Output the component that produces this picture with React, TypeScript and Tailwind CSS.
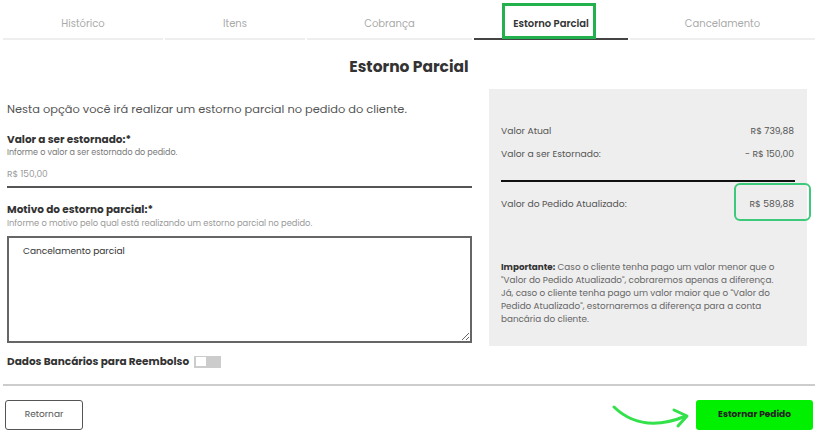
import React from 'react';

const tabs = [
  { label: 'Histórico', w: 'w-[160px]' },
  { label: 'Itens', w: 'w-[140px]' },
  { label: 'Cobrança', w: 'w-[165px]' },
  { label: 'Estorno Parcial', w: 'w-[154px]', active: true },
  { label: 'Cancelamento', w: 'flex-1' },
];

const App: React.FC = () => {
  return (
    <div className="w-[818px] h-[438px] bg-white text-[#333] overflow-hidden" style={{ fontFamily: 'Poppins, Inter, "Noto Sans", sans-serif' }}>
      {/* Tabs */}
      <div className="flex gap-[2px] px-[3px] h-[40px]">
        {tabs.map((tab) => (
          <div
            key={tab.label}
            className={`${tab.w} relative flex items-center justify-center pt-[8px] border-b-2 ${tab.active ? 'border-[#444]' : 'border-[#eee]'}`}
          >
            <span className={`text-[10px] ${tab.active ? 'font-semibold text-[#333]' : 'text-[#aaa]'}`}>{tab.label}</span>
            {tab.active && (
              <div className="absolute left-[28px] top-[3px] w-[94px] h-[36px] border-[3px] border-[#22b14c]" />
            )}
          </div>
        ))}
      </div>

      <h2 className="text-center text-[15.5px] font-bold text-[#333] mt-[17px] leading-[20px]">Estorno Parcial</h2>

      <div className="flex px-[7px] mt-[12px] gap-[16px]">
        {/* Form column */}
        <div className="w-[465px]">
          <p className="text-[11.4px] text-[#555] mt-[12px] leading-[16px]">Nesta opção você irá realizar um estorno parcial no pedido do cliente.</p>

          <p className="text-[10.5px] font-bold text-[#333] mt-[15px] leading-[16px]">Valor a ser estornado:*</p>
          <p className="text-[8px] text-[#777] leading-[10px]">Informe o valor a ser estornado do pedido.</p>
          <div className="mt-[10px] pb-[6px] border-b-2 border-[#555] text-[9px] text-[#999] leading-[12px]">R$ 150,00</div>

          <p className="text-[10.5px] font-bold text-[#333] mt-[14px] leading-[16px]">Motivo do estorno parcial:*</p>
          <p className="text-[8.3px] text-[#999] leading-[10px]">Informe o motivo pelo qual está realizando um estorno parcial no pedido.</p>
          <textarea
            className="mt-[8px] w-full h-[107px] border-2 border-[#666] px-[14px] py-[7px] text-[9px] text-[#333] outline-none block resize-y"
            defaultValue="Cancelamento parcial"
          />

          <div className="flex items-center gap-[5px] mt-[11px]">
            <span className="text-[10.5px] font-bold text-[#333]">Dados Bancários para Reembolso</span>
            <div className="w-[27px] h-[12px] bg-[#ccc] flex items-center pl-[2px]">
              <div className="w-[10px] h-[9px] bg-white" />
            </div>
          </div>
        </div>

        {/* Summary panel */}
        <div className="w-[318px] h-[257px] bg-[#eeeeee] px-[12px] pt-[36px] ml-[1px]">
          <div className="flex justify-between text-[9.2px] text-[#555] leading-[12px]">
            <span>Valor Atual</span>
            <span className="pr-[1px]">R$ 739,88</span>
          </div>
          <div className="flex justify-between text-[9.2px] text-[#555] leading-[12px] mt-[11px]">
            <span>Valor a ser Estornado:</span>
            <span className="pr-[1px]">- R$ 150,00</span>
          </div>
          <div className="mt-[20px] h-[2px] bg-[#111]" />
          <div className="flex justify-between text-[9.2px] text-[#555] leading-[12px] mt-[16px] relative">
            <span>Valor do Pedido Atualizado:</span>
            <span className="pr-[1px]">R$ 589,88</span>
            <div className="absolute right-[-16px] top-[-15px] w-[77px] h-[38px] border-2 border-[#3dc97a] rounded-[6px]" />
          </div>
          <p className="text-[8.8px] text-[#666] leading-[13px] mt-[51px] pr-[10px]">
            <span className="font-bold text-[#333]">Importante:</span> Caso o cliente tenha pago um valor menor que o "Valor do Pedido Atualizado", cobraremos apenas a diferença. Já, caso o cliente tenha pago um valor maior que o "Valor do Pedido Atualizado", estornaremos a diferença para a conta bancária do cliente.
          </p>
        </div>
      </div>

      <div className="mx-[3px] mt-[14px] h-[2px] bg-[#ccc]" />

      {/* Footer actions */}
      <div className="flex items-center justify-between px-[5px] mt-[12px]">
        <button className="w-[78px] h-[30px] border-[1.5px] border-[#555] rounded-[3px] text-[9px] text-[#555]">Retornar</button>
        <div className="flex items-center gap-[4px]">
          <svg width="80" height="30" viewBox="0 0 80 30" className="mt-[4px]">
            <path d="M2 5 Q 30 32 74 14" fill="none" stroke="#33e14a" strokeWidth="3" strokeLinecap="round" />
            <path d="M62 8 L75 14 L66 24" fill="none" stroke="#33e14a" strokeWidth="3" strokeLinecap="round" strokeLinejoin="round" />
          </svg>
          <button className="w-[117px] h-[30px] bg-[#00f000] rounded-[3px] text-[9px] font-bold text-[#222]">Estornar Pedido</button>
        </div>
      </div>
    </div>
  );
};

export default App;
